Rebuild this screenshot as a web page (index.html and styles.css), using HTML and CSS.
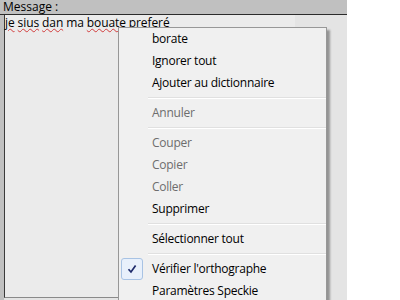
FILE: index.html
```html
<!DOCTYPE html>
<html lang="fr">
<head>
  <meta charset="UTF-8">
  <title>Message</title>
  <link rel="stylesheet" href="styles.css">
</head>
<body>
<div class="frame">
  <div class="label-bar">Message :</div>
  <div class="panel">
    <div class="textarea">
      <span class="typo">je</span> <span class="typo">sius</span> <span class="typo">dan</span> ma <span class="typo">bouate</span> <span class="typo">preferé</span>
    </div>
  </div>
</div>

<!-- Spell check context menu -->
<ul class="menu">
  <li>borate</li>
  <li>Ignorer tout</li>
  <li>Ajouter au dictionnaire</li>
  <li class="sep"></li>
  <li class="disabled">Annuler</li>
  <li class="sep"></li>
  <li class="disabled">Couper</li>
  <li class="disabled">Copier</li>
  <li class="disabled">Coller</li>
  <li>Supprimer</li>
  <li class="sep"></li>
  <li>Sélectionner tout</li>
  <li class="sep"></li>
  <li class="checked">
    <span class="check">
      <svg width="10" height="10" viewBox="0 0 10 10"><path d="M1.5 5.2 L4 8 L8.6 1.5" fill="none" stroke="#1d2a6b" stroke-width="1.7"/></svg>
    </span>
    Vérifier l'orthographe
  </li>
  <li>Paramètres Speckie</li>
</ul>
</body>
</html>
```

FILE: styles.css
```css
html, body {
    margin: 0;
    padding: 0;
    background-color: #ffffff;
    overflow: hidden;
}
body {
    width: 400px;
    height: 300px;
    font-family: "Open Sans", "DejaVu Sans", sans-serif;
    font-size: 12px;
}
.frame {
    width: 347px;
    height: 300px;
    display: flex;
    flex-direction: column;
}
.label-bar {
    height: 14px;
    line-height: 14px;
    padding-left: 3px;
    background-color: #c0c0c0;
    border-bottom: 1px solid #2b2b2b;
    color: #000;
    font-size: 12px;
}
.panel {
    flex: 1;
    display: flex;
    background-color: #e4e4e4;
    border-left: 4px solid #c0c0c0;
    padding-bottom: 2px;
}
.textarea {
    width: 290px;
    background-color: #ebebeb;
    border-left: 1px solid #3a3a3a;
    border-bottom: 1px solid #8a8a8a;
    padding-top: 1px;
    line-height: 14px;
    font-size: 12px;
    letter-spacing: -0.1px;
    color: #000;
}
.typo {
    text-decoration: underline wavy #d23b3b;
    text-decoration-thickness: 1px;
    text-underline-offset: 1px;
}
.menu {
    position: absolute;
    left: 118px;
    top: 27px;
    width: 207px;
    margin: 0;
    padding: 0;
    list-style: none;
    background-color: #f0f0f0;
    border: 1px solid #979797;
    box-shadow: 3px 3px 2px rgba(0, 0, 0, 0.35);
    color: #000;
}
.menu li {
    position: relative;
    height: 22px;
    line-height: 22px;
    padding-left: 33px;
    letter-spacing: -0.25px;
}
.menu li.disabled {
    color: #6d6d6d;
}
.menu li.sep {
    height: 8px;
    padding: 0;
    margin-left: 29px;
    display: flex;
    flex-direction: column;
    justify-content: center;
}
.menu li.sep::before {
    content: "";
    border-top: 1px solid #e0e0e0;
    border-bottom: 1px solid #ffffff;
}
.check {
    position: absolute;
    left: 2px;
    top: 0;
    width: 20px;
    height: 20px;
    border: 1px solid #a8c3e4;
    border-radius: 3px;
    background-color: #e8f0fb;
    display: flex;
    align-items: center;
    justify-content: center;
}
```
